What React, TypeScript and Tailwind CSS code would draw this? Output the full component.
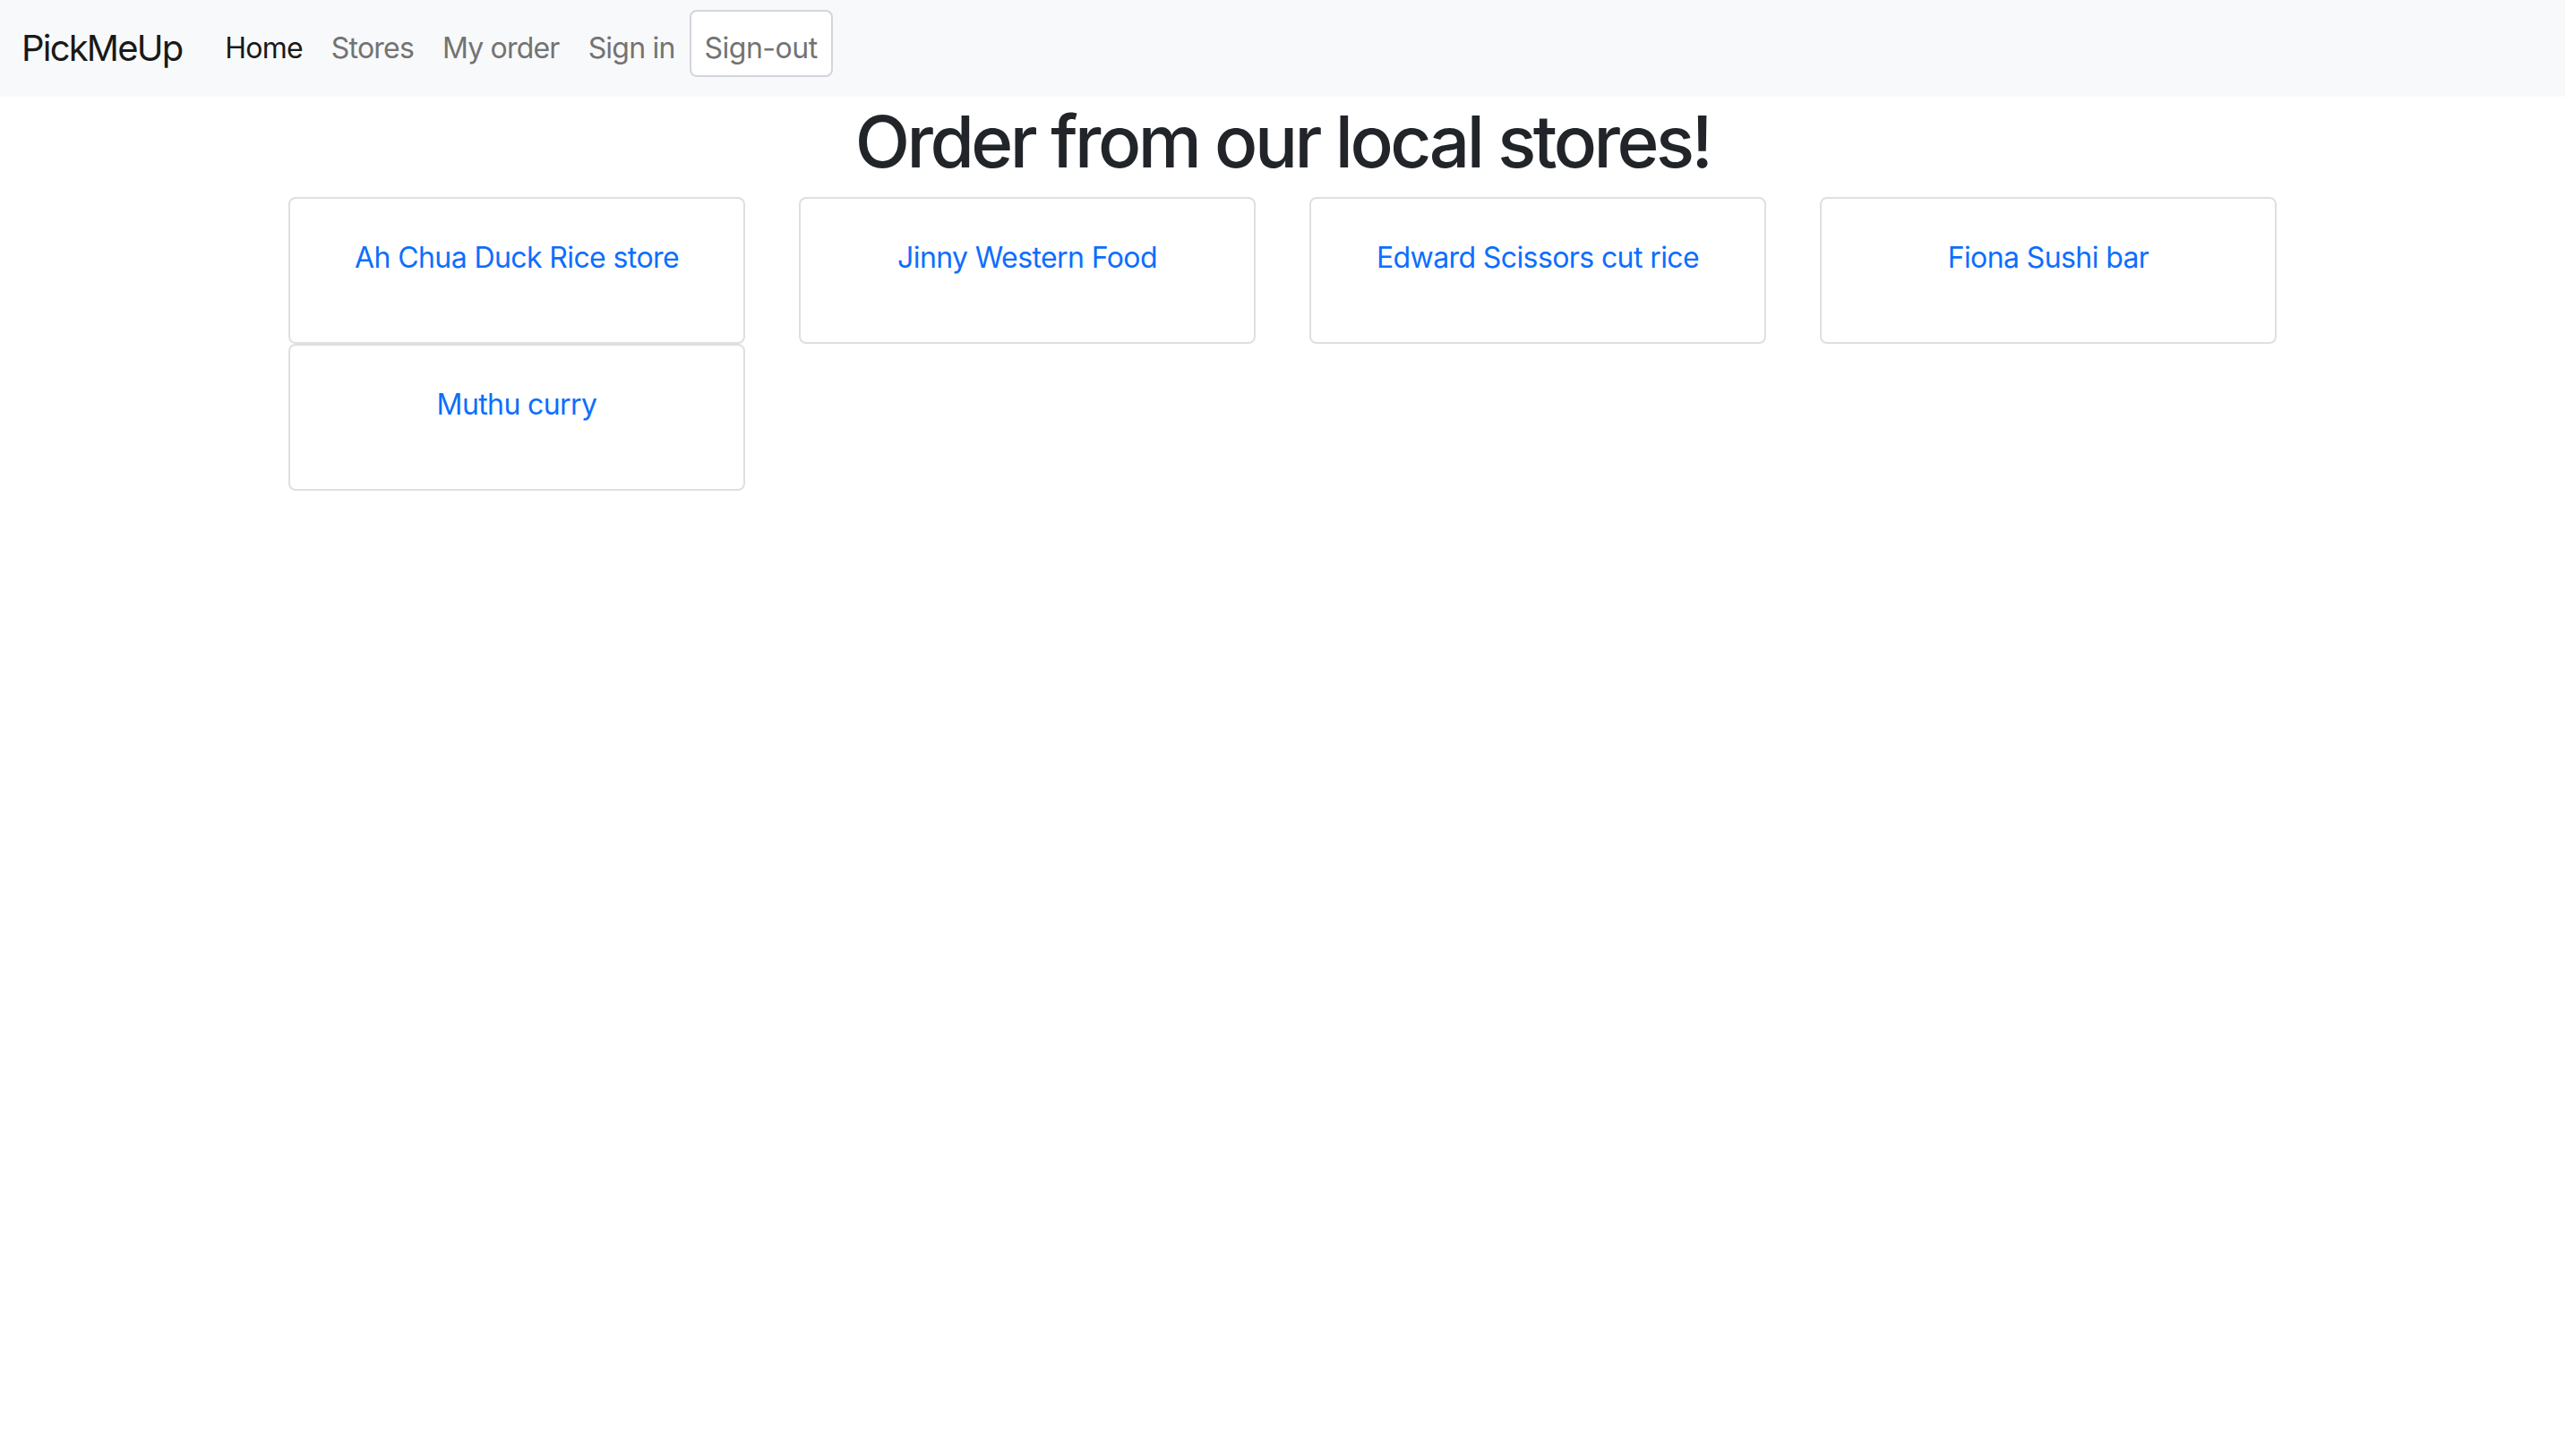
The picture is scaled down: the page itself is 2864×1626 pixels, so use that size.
import React from "react";

const stores = [
  "Ah Chua Duck Rice store",
  "Jinny Western Food",
  "Edward Scissors cut rice",
  "Fiona Sushi bar",
  "Muthu curry",
];

export default function App() {
  return (
    <div
      className="min-h-[1626px] bg-white"
      style={{ fontFamily: "Inter, 'Noto Sans', 'Liberation Sans', sans-serif" }}
    >
      <nav className="flex h-[108px] items-center bg-[#f8f9fa] pl-[24px]">
        <a className="mr-[32px] text-[40px] leading-[60px] tracking-[-1.8px] text-[#191919]">PickMeUp</a>
        <ul className="flex items-center">
          <li className="px-[16px] text-[32px] leading-[48px] tracking-[-0.8px] text-[#191919]">Home</li>
          <li className="px-[16px] text-[32px] leading-[48px] tracking-[-0.8px] text-[#737373]">Stores</li>
          <li className="px-[16px] text-[32px] leading-[48px] tracking-[-0.8px] text-[#737373]">My order</li>
          <li className="px-[16px] text-[32px] leading-[48px] tracking-[-0.8px] text-[#737373]">Sign in</li>
        </ul>
        <button className="mb-[12px] rounded-[8px] border-2 border-[#d3d6da] bg-white px-[15px] pt-[17px] pb-[6px] text-[32px] leading-[48px] tracking-[-0.5px] text-[#737373]">
          Sign-out
        </button>
      </nav>
      <h1 className="mb-[14px] pt-[2px] text-center text-[80px] font-medium leading-[96px] tracking-[-3.5px] text-[#212529]">
        Order from our local stores!
      </h1>
      <div className="mx-auto grid w-[2220px] grid-cols-4 gap-x-[60px]">
        {stores.map((s) => (
          <div
            key={s}
            className="h-[164px] rounded-[8px] border-2 border-[#dfdfdf] px-[40px] pt-[42px] text-center"
          >
            <a className="text-[32px] leading-[48px] tracking-[-0.6px] text-[#0d6efd]">{s}</a>
          </div>
        ))}
      </div>
    </div>
  );
}
